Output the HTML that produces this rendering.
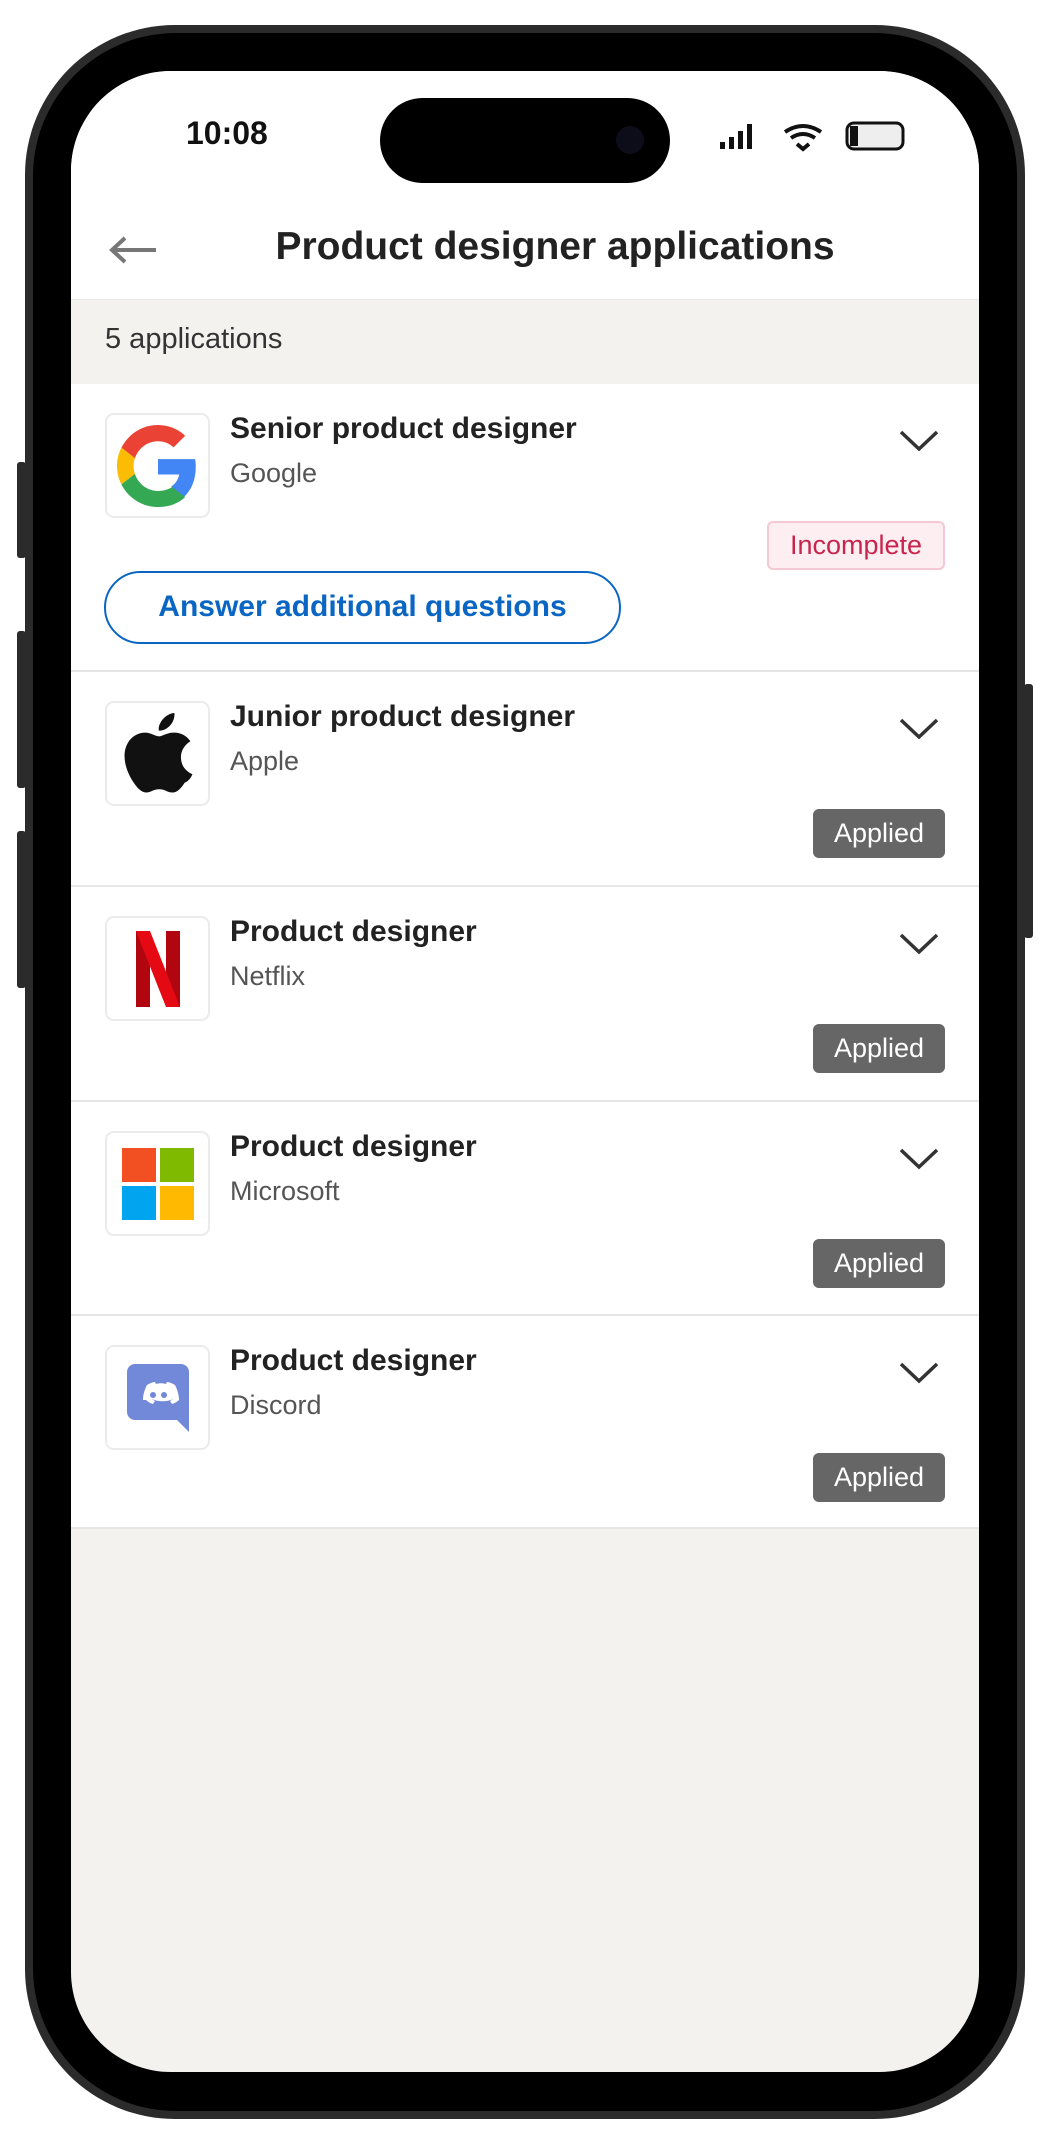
<!DOCTYPE html>
<html><head><meta charset="utf-8"><style>
*{margin:0;padding:0;box-sizing:border-box}
body{width:1050px;height:2143px;background:#fff;position:relative;overflow:hidden;font-family:"Liberation Sans",Arial,sans-serif}
.abs{position:absolute}
.body{left:25px;top:25px;width:1000px;height:2094px;border-radius:150px;background:#2b2b2b;}
.bezel{left:33px;top:33px;width:984px;height:2078px;border-radius:143px;background:#000}
.screen{left:71px;top:71px;width:908px;height:2001px;border-radius:100px;background:#f3f2ef;overflow:hidden}
.btn{background:#2b2b2b;border-radius:3px}
.card{position:absolute;left:0;width:908px;background:#fff;border-bottom:2px solid #e6e6e6}
.logo{position:absolute;left:34px;top:29px;width:105px;height:105px;border:2px solid #ebebeb;border-radius:9px;background:#fff;display:flex;align-items:center;justify-content:center}
.t{position:absolute;left:159px;top:28px;font-size:30px;font-weight:bold;color:#222}
.c{position:absolute;left:159px;top:74px;font-size:27px;color:#555}
.chev{position:absolute;left:827px;top:45px}
.ap{position:absolute;left:742px;width:132px;height:49px;background:#666;color:#fff;font-size:27px;border-radius:6px;text-align:center;line-height:49px}
</style></head><body>
<div class="abs btn" style="left:17px;top:462px;width:9px;height:96px"></div>
<div class="abs btn" style="left:17px;top:631px;width:9px;height:157px"></div>
<div class="abs btn" style="left:17px;top:831px;width:9px;height:157px"></div>
<div class="abs btn" style="left:1024px;top:684px;width:9px;height:254px"></div>
<div class="abs body"></div>
<div class="abs bezel"></div>
<div class="abs screen">
  <div class="abs" style="left:0;top:0;width:908px;height:228px;background:#fff"></div>
  <div class="abs" style="left:309px;top:27px;width:290px;height:85px;border-radius:43px;background:#000"></div>
  <div class="abs" style="left:545px;top:55px;width:28px;height:28px;border-radius:14px;background:#0d0d1a"></div>
  <div class="abs" style="left:115px;top:44px;font-size:32px;font-weight:bold;color:#111">10:08</div>
  <svg class="abs" style="left:649px;top:49px" width="190" height="34" viewBox="0 0 190 34">
    <rect x="0" y="22" width="5" height="7" fill="#111"/><rect x="9" y="17" width="5" height="12" fill="#111"/><rect x="18" y="11" width="5" height="18" fill="#111"/><rect x="27" y="4" width="5" height="25" fill="#111"/>
    <path d="M65 12 Q83 0 101 12 M71 18 Q83 10 95 18 M77 24 L83 29 L89 24" stroke="#111" stroke-width="4" fill="none"/>
    <rect x="127" y="3" width="56" height="26" rx="7" fill="#eee" stroke="#111" stroke-width="3"/><rect x="130" y="6" width="8" height="20" fill="#111"/>
  </svg>
  <svg class="abs" style="left:37px;top:164px" width="50" height="30" viewBox="0 0 50 30"><path d="M48 15H5M17 3L4 15L17 27" stroke="#777" stroke-width="4" fill="none"/></svg>
  <div class="abs" style="left:0;width:908px;top:154px;text-align:center;font-size:39px;font-weight:bold;color:#222;padding-left:60px">Product designer applications</div>
  <div class="abs" style="left:0;top:228px;width:908px;height:85px;background:#f3f2ef;border-top:1px solid #e6e6e6"></div>
  <div class="abs" style="left:34px;top:252px;font-size:29px;color:#333">5 applications</div>

  <div class="card" style="top:313px;height:288px">
    <div class="logo"><svg width="82" height="82" viewBox="0 0 48 48"><path fill="#EA4335" d="M24 9.5c3.5 0 6.6 1.2 9.1 3.6l6.8-6.8C35.8 2.4 30.2 0 24 0 14.6 0 6.6 5.4 2.6 13.3l7.9 6.2C12.4 13.7 17.7 9.5 24 9.5z"/><path fill="#4285F4" d="M46.1 24.5c0-1.6-.1-3.1-.4-4.5H24v9h12.4c-.5 2.9-2.2 5.4-4.7 7.1l7.6 5.9c4.4-4.1 6.8-10.1 6.8-17.5z"/><path fill="#FBBC05" d="M10.5 28.6c-.5-1.4-.8-3-.8-4.6s.3-3.2.8-4.6l-7.9-6.2C.9 16.5 0 20.1 0 24s.9 7.5 2.6 10.8l7.9-6.2z"/><path fill="#34A853" d="M24 48c6.5 0 11.900-2.1 15.900-5.8l-7.6-5.9c-2.1 1.4-4.9 2.3-8.3 2.3-6.3 0-11.6-4.2-13.5-10l-7.9 6.2C6.6 42.6 14.6 48 24 48z"/></svg></div>
    <div class="t">Senior product designer</div><div class="c">Google</div>
    <svg class="chev" width="42" height="24" viewBox="0 0 42 24"><path d="M3 3L21 20L39 3" stroke="#333" stroke-width="3.5" fill="none"/></svg>
    <div class="abs" style="left:696px;top:137px;width:178px;height:49px;background:#fdeef1;border:2px solid #f4c9d3;border-radius:6px;color:#c7254e;font-size:27px;text-align:center;line-height:45px">Incomplete</div>
    <div class="abs" style="left:33px;top:187px;width:517px;height:73px;border:2.5px solid #0a66c2;border-radius:37px;color:#0a66c2;font-size:30px;font-weight:bold;text-align:center;line-height:68px">Answer additional questions</div>
  </div>

  <div class="card" style="top:601px;height:215px">
    <div class="logo"><svg width="70" height="82" viewBox="0 0 170 200"><path fill="#111" d="M150 170c-8 12-17 24-30 24s-17-8-32-8-20 8-32 8-22-12-31-25C7 142-6 102 12 72c9-15 25-24 42-24 13 0 25 9 33 9s23-11 39-9c7 0 26 3 38 21-1 1-23 13-23 39 0 31 27 41 28 41-1 2-5 15-19 21z"/><path fill="#111" d="M115 30c7-8 11-19 10-30-10 0-21 7-28 15-6 7-12 18-10 28 10 1 21-5 28-13z"/></svg></div>
    <div class="t">Junior product designer</div><div class="c">Apple</div>
    <svg class="chev" width="42" height="24" viewBox="0 0 42 24"><path d="M3 3L21 20L39 3" stroke="#333" stroke-width="3.5" fill="none"/></svg>
    <div class="ap" style="top:137px">Applied</div>
  </div>

  <div class="card" style="top:816px;height:215px">
    <div class="logo"><svg width="44" height="76" viewBox="0 0 44 76"><path fill="#b1060f" d="M0 0h14v76H0z"/><path fill="#b1060f" d="M30 0h14v76H30z"/><path fill="#e50914" d="M0 0h14l30 76H30z"/></svg></div>
    <div class="t">Product designer</div><div class="c">Netflix</div>
    <svg class="chev" width="42" height="24" viewBox="0 0 42 24"><path d="M3 3L21 20L39 3" stroke="#333" stroke-width="3.5" fill="none"/></svg>
    <div class="ap" style="top:137px">Applied</div>
  </div>

  <div class="card" style="top:1031px;height:214px">
    <div class="logo"><svg width="72" height="72" viewBox="0 0 72 72"><rect width="34" height="34" fill="#f25022"/><rect x="38" width="34" height="34" fill="#7fba00"/><rect y="38" width="34" height="34" fill="#00a4ef"/><rect x="38" y="38" width="34" height="34" fill="#ffb900"/></svg></div>
    <div class="t">Product designer</div><div class="c">Microsoft</div>
    <svg class="chev" width="42" height="24" viewBox="0 0 42 24"><path d="M3 3L21 20L39 3" stroke="#333" stroke-width="3.5" fill="none"/></svg>
    <div class="ap" style="top:137px">Applied</div>
  </div>

  <div class="card" style="top:1245px;height:213px">
    <div class="logo"><svg width="62" height="68" viewBox="0 0 62 68"><path fill="#7289da" d="M8 0h46a8 8 0 0 1 8 8v60L50 56H8a8 8 0 0 1-8-8V8a8 8 0 0 1 8-8z"/><path fill="#fff" d="M16 36c0-8 4-15 4-15 5-3 8-3 8-3l1 2c4-1 6-1 10 0l1-2s3 0 8 3c0 0 4 7 4 15-3 3-7 4-7 4l-2-3c2-1 3-2 3-2-6 3-15 3-21 0 0 0 1 1 3 2l-2 3s-4-1-7-4z"/><circle cx="26" cy="31" r="3" fill="#7289da"/><circle cx="37" cy="31" r="3" fill="#7289da"/></svg></div>
    <div class="t">Product designer</div><div class="c">Discord</div>
    <svg class="chev" width="42" height="24" viewBox="0 0 42 24"><path d="M3 3L21 20L39 3" stroke="#333" stroke-width="3.5" fill="none"/></svg>
    <div class="ap" style="top:137px">Applied</div>
  </div>
</div>
</body></html>
